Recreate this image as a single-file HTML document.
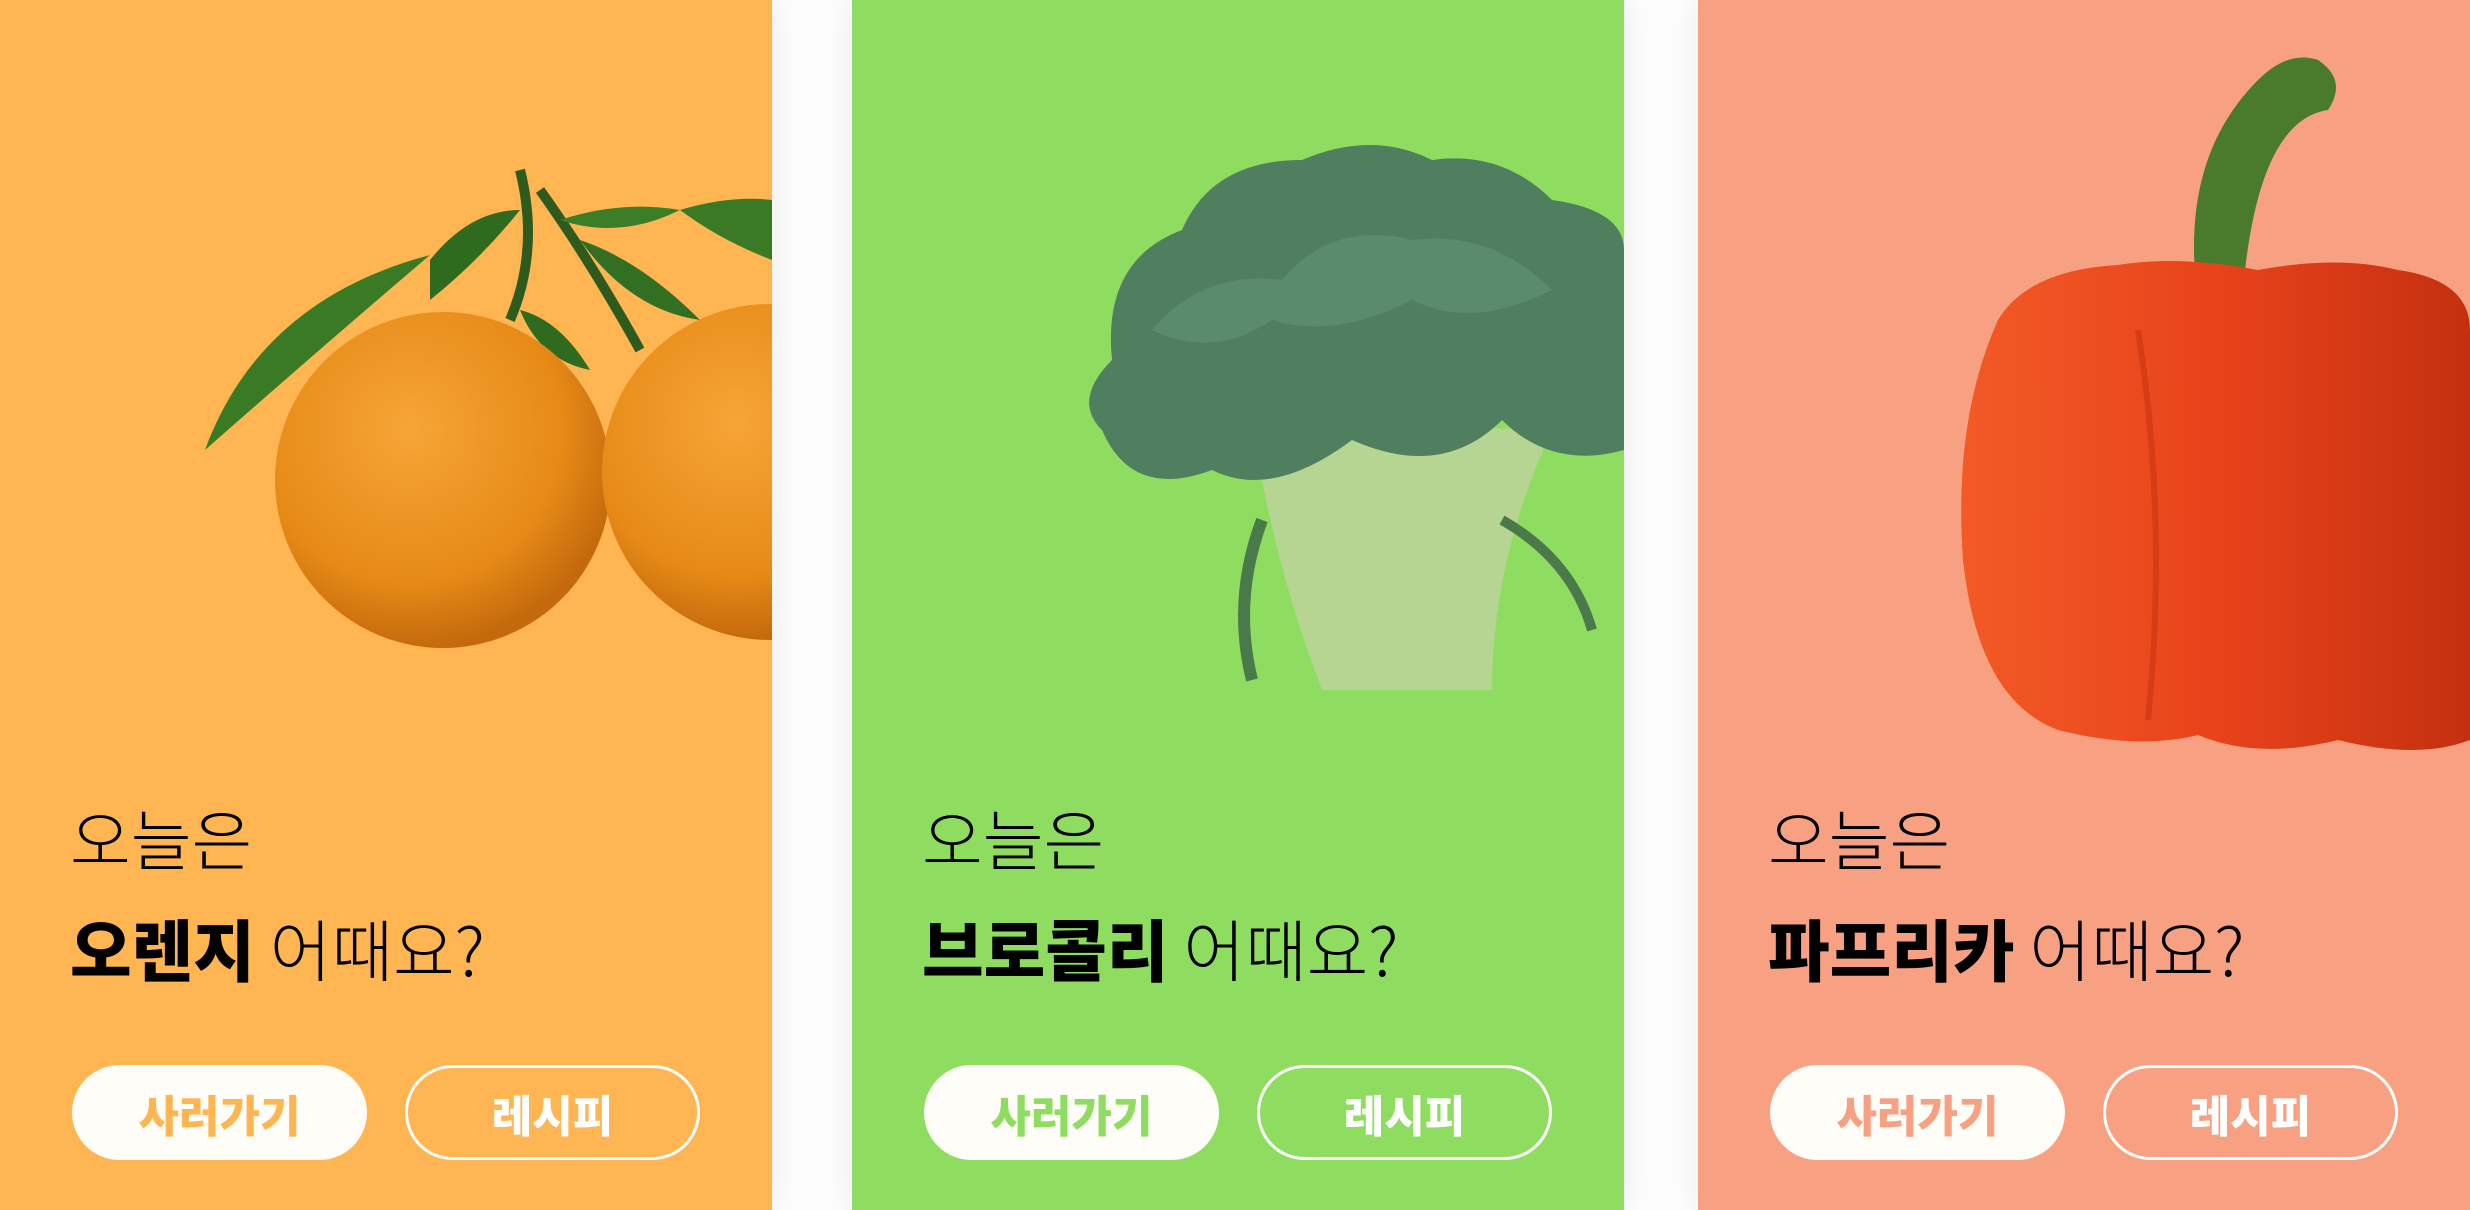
<!DOCTYPE html>
<html><head><meta charset="utf-8"><style>
*{margin:0;padding:0;box-sizing:border-box}
body{width:2470px;height:1210px;background:#fdfdfd;position:relative;overflow:hidden;font-family:"Liberation Sans","Noto Sans CJK KR",sans-serif}
.card{position:absolute;top:0;width:772px;height:1210px;overflow:hidden;box-shadow:0 0 30px rgba(0,0,0,0.08)}
.c1{left:0;background:#FFB551}.c2{left:852px;background:#8EDD60}.c3{left:1698px;background:#F8A182}
.t1{position:absolute;left:70px;top:797px;font-size:66px;font-weight:300;line-height:80px;color:#000;font-family:"Noto Sans CJK KR",sans-serif}
.t2{position:absolute;left:70px;top:903px;font-size:67px;line-height:90px;color:#000;font-family:"Noto Sans CJK KR",sans-serif;font-weight:300}
.t2 b{font-weight:900}
.btn{position:absolute;top:1065px;width:295px;height:95px;border-radius:48px;font-size:44px;font-weight:900;display:flex;align-items:center;justify-content:center;font-family:"Noto Sans CJK KR",sans-serif}
.b1{left:72px;background:#fffdf8}
.b2{left:405px;border:3px solid #fff;color:#fff}
svg{position:absolute;left:0;top:0}
</style></head><body>
<div class="card c1">
<svg width="772" height="760">
<defs><radialGradient id="og" cx="40%" cy="35%" r="65%"><stop offset="0" stop-color="#F6A537"/><stop offset="0.7" stop-color="#E68A17"/><stop offset="1" stop-color="#C46A0C"/></radialGradient></defs>
<path d="M520 170 Q540 250 510 320" stroke="#2f5a1e" stroke-width="10" fill="none"/>
<path d="M540 190 Q590 260 640 350" stroke="#2f5a1e" stroke-width="10" fill="none"/>
<path d="M205 450 Q260 300 430 255 Q330 340 205 450Z" fill="#3b7a25"/>
<path d="M430 260 Q470 210 520 210 Q480 260 430 300Z" fill="#2f6b1f"/>
<path d="M580 240 Q640 260 700 320 Q630 310 580 240Z" fill="#336f22"/>
<path d="M560 220 Q620 200 680 210 Q620 240 560 220Z" fill="#3c7d27"/>
<path d="M680 210 Q730 195 772 200 L772 260 Q720 240 680 210Z" fill="#3a7a25"/>
<path d="M520 310 Q560 320 590 370 Q540 360 520 310Z" fill="#2f6b1f"/>
<circle cx="443" cy="480" r="168" fill="url(#og)"/>
<circle cx="770" cy="472" r="168" fill="url(#og)"/>
</svg>
<div class="t1">오늘은</div>
<div class="t2"><b>오렌지</b> 어때요?</div>
<div class="btn b1" style="color:#FFB551">사러가기</div>
<div class="btn b2">레시피</div>
</div>
<div class="card c2">
<svg width="772" height="760">
<path d="M400 420 Q420 560 470 690 L640 690 Q640 560 700 430Z" fill="#b6d592"/>
<path d="M410 520 Q380 600 400 680" stroke="#4b7a4a" stroke-width="12" fill="none"/>
<path d="M650 520 Q720 560 740 630" stroke="#4b7a4a" stroke-width="10" fill="none"/>
<path d="M260 360 Q250 260 330 230 Q360 160 450 160 Q520 130 580 160 Q650 150 700 200 Q772 210 772 250 L772 450 Q700 470 650 420 Q590 480 500 440 Q420 500 360 470 Q280 500 250 430 Q220 400 260 360Z" fill="#4f7f5e"/>
<path d="M300 330 Q350 270 430 280 Q480 220 560 240 Q640 230 700 290 Q620 330 560 300 Q480 340 420 320 Q360 360 300 330Z" fill="#5f9170" opacity="0.7"/>
</svg>
<div class="t1">오늘은</div>
<div class="t2"><b>브로콜리</b> 어때요?</div>
<div class="btn b1" style="color:#8EDD60">사러가기</div>
<div class="btn b2">레시피</div>
</div>
<div class="card c3">
<svg width="772" height="760">
<defs><linearGradient id="pg" x1="0" y1="0" x2="1" y2="0"><stop offset="0" stop-color="#F25A26"/><stop offset="0.5" stop-color="#E8431B"/><stop offset="1" stop-color="#C4300F"/></linearGradient></defs>
<path d="M500 300 Q480 160 560 80 Q590 50 620 60 Q650 80 630 110 Q560 120 545 290Z" fill="#4a7a2c"/>
<path d="M300 320 Q330 270 420 265 Q480 255 560 270 Q640 255 700 270 Q772 280 772 330 L772 740 Q720 760 640 740 Q560 760 500 735 Q440 750 360 730 Q280 700 265 560 Q255 420 300 320Z" fill="url(#pg)"/>
<path d="M440 330 Q470 520 450 720" stroke="#c8340f" stroke-width="6" fill="none" opacity="0.6"/>
</svg>
<div class="t1">오늘은</div>
<div class="t2"><b>파프리카</b> 어때요?</div>
<div class="btn b1" style="color:#F8A182">사러가기</div>
<div class="btn b2">레시피</div>
</div>
</body></html>
